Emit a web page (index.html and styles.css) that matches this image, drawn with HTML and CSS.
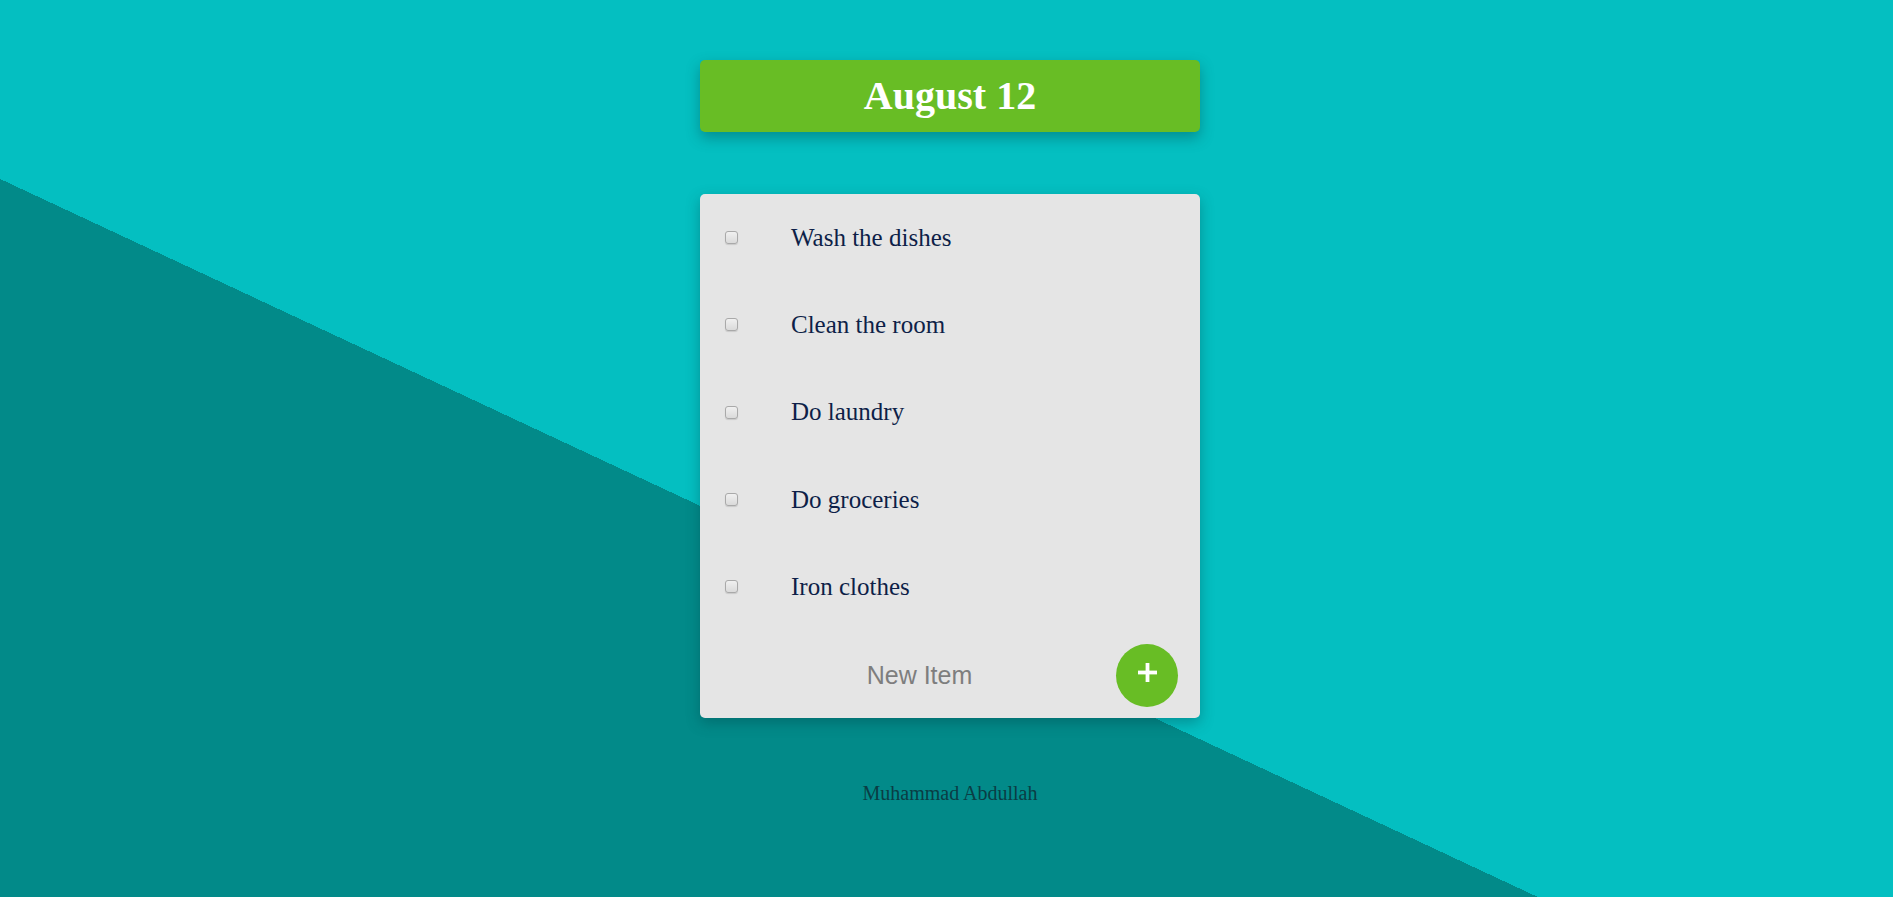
FILE: index.html
```html
<!DOCTYPE html>
<html lang="en">
<head>
<meta charset="utf-8">
<title>To Do List</title>
<link rel="stylesheet" href="styles.css">
</head>
<body>
  <main class="page">
    <div class="heading">
      <h1 class="heading-title">August 12</h1>
    </div>

    <div class="card">
      <div class="item">
        <input class="check" type="checkbox">
        <p class="item-text">Wash the dishes</p>
      </div>
      <div class="item">
        <input class="check" type="checkbox">
        <p class="item-text">Clean the room</p>
      </div>
      <div class="item">
        <input class="check" type="checkbox">
        <p class="item-text">Do laundry</p>
      </div>
      <div class="item">
        <input class="check" type="checkbox">
        <p class="item-text">Do groceries</p>
      </div>
      <div class="item">
        <input class="check" type="checkbox">
        <p class="item-text">Iron clothes</p>
      </div>
      <form class="item new-item">
        <input class="new-input" type="text" name="newItem" placeholder="New Item" autocomplete="off">
        <button class="add-btn" type="button" aria-label="Add">
          <svg class="plus" width="19" height="19" viewBox="0 0 19 19" aria-hidden="true">
            <rect x="0" y="7.6" width="19" height="3.8" fill="#ffffff"/>
            <rect x="7.6" y="0" width="3.8" height="19" fill="#ffffff"/>
          </svg>
        </button>
      </form>
    </div>

    <footer class="footer">
      <p class="footer-text">Muhammad Abdullah</p>
    </footer>
  </main>
</body>
</html>
```

FILE: styles.css
```css
html {
  height: 100%;
  background: linear-gradient(25.03deg, #028a89 40.32%, #04bfc1 40.32%);
}

body {
  margin: 0;
  padding-left: 7px;
  font-family: "Liberation Serif", "Times New Roman", serif;
}

.page {
  width: 500px;
  margin: 0 auto;
  padding-top: 60px;
  display: flex;
  flex-direction: column;
}

.heading {
  height: 72px;
  background: #68bd25;
  border-radius: 5px;
  display: flex;
  align-items: center;
  justify-content: center;
  box-shadow: 0 6px 14px rgba(0, 70, 75, 0.4);
}

.heading-title {
  margin: 0;
  color: #ffffff;
  font-size: 40px;
  font-weight: bold;
  line-height: 1;
  padding-bottom: 1px;
}

.card {
  margin-top: 62px;
  background: #e5e5e5;
  border-radius: 5px;
  box-shadow: 0 5px 14px rgba(0, 60, 65, 0.35);
  display: flex;
  flex-direction: column;
}

.item {
  height: 87.33px;
  display: flex;
  align-items: center;
  padding-left: 25px;
  margin: 0;
}

.check {
  appearance: none;
  -webkit-appearance: none;
  margin: 0;
  width: 13px;
  height: 13px;
  box-sizing: border-box;
  border: 1px solid #a9a9a9;
  border-radius: 3px;
  background: linear-gradient(#f0f0f0, #dadada);
  box-shadow: 0 1px 1px rgba(0, 0, 0, 0.12);
  flex: none;
}

.item-text {
  margin: 0 0 0 53px;
  font-size: 25px;
  color: #0e1f48;
  line-height: 1.2;
}

.new-item {
  padding-right: 22px;
  padding-top: 2px;
  box-sizing: border-box;
}

.new-input {
  flex: 1;
  min-width: 0;
  border: none;
  outline: none;
  background: transparent;
  text-align: center;
  font-family: "Liberation Sans", Arial, sans-serif;
  font-size: 25px;
  color: #333333;
  padding: 0;
  margin-right: 2px;
}

.new-input::placeholder {
  color: #7e7e7e;
}

.add-btn {
  width: 62px;
  height: 63px;
  border-radius: 50%;
  border: none;
  background: #68bd25;
  padding: 0 0 6px 0;
  display: flex;
  align-items: center;
  justify-content: center;
  flex: none;
  cursor: pointer;
}

.plus {
  display: block;
}

.footer {
  margin-top: 64px;
  text-align: center;
}

.footer-text {
  margin: 0;
  font-size: 20px;
  color: #0a3d44;
}
```
